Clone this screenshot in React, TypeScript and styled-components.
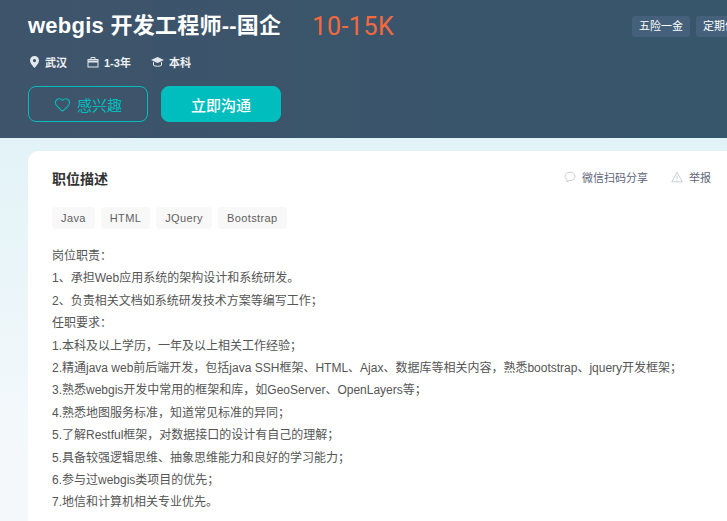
import React from "react";
import styled, { createGlobalStyle } from "styled-components";
import { Heart } from "lucide-react";

const Global = createGlobalStyle`
  html, body {
    margin: 0;
    padding: 0;
    height: 100%;
    overflow: hidden;
    background: #fff;
  }
  body {
    font-family: "Liberation Sans", "Noto Sans CJK SC", sans-serif;
  }
`;

const Page = styled.div`
  width: 727px;
  height: 521px;
  overflow: hidden;
  background: linear-gradient(180deg, #e2f3f7 0, #e2f3f7 138px, #f3f8fb 420px, #f5f8fb 100%);
`;

const Banner = styled.header`
  height: 138px;
  box-sizing: border-box;
  padding: 13px 0 0 28px;
  background: linear-gradient(90deg, #3e546b 0%, #37566b 100%);
  color: #fff;
  position: relative;
`;

const TitleRow = styled.div`
  display: flex;
  align-items: center;
  height: 26px;
`;

const Title = styled.h1`
  margin: 0;
  font-size: 22px;
  line-height: 26px;
  font-weight: 700;
  letter-spacing: 0.25px;
  white-space: nowrap;
`;

const Salary = styled.span`
  margin-left: 31px;
  font-family: Roboto, "Liberation Sans", sans-serif;
  font-size: 25px;
  font-weight: 400;
  letter-spacing: 0.5px;
  color: #f5693f;
`;

const Welfare = styled.div`
  position: absolute;
  left: 632px;
  top: 16px;
  display: flex;
  gap: 6px;
`;

const WelfareTag = styled.span`
  height: 21px;
  line-height: 21px;
  padding: 0 7px;
  border-radius: 3px;
  background: #44607a;
  font-size: 11px;
  white-space: nowrap;
`;

const MetaRow = styled.div`
  display: flex;
  align-items: center;
  gap: 20px;
  margin-top: 14px;
  height: 18px;
  padding-left: 1px;
`;

const MetaItem = styled.span`
  display: inline-flex;
  align-items: center;
  gap: 5px;
  font-size: 11px;
  font-weight: 700;
  color: #eef1f4;
`;

const Actions = styled.div`
  display: flex;
  gap: 13px;
  margin-top: 15px;
`;

const ActionButton = styled.button<{ $filled?: boolean }>`
  width: 120px;
  height: 36px;
  box-sizing: border-box;
  border-radius: 8px;
  border: 1px solid #00bebd;
  background: ${(p) => (p.$filled ? "#00bebd" : "transparent")};
  color: ${(p) => (p.$filled ? "#fff" : "#00bebd")};
  display: flex;
  align-items: center;
  justify-content: center;
  gap: 6px;
  font-family: inherit;
  font-size: 15px;
  font-weight: ${(p) => (p.$filled ? 500 : 400)};
  padding: 0;
`;

const Body = styled.main`
  padding: 13px 0 0 28px;
`;

const Card = styled.section`
  width: 760px;
  height: 420px;
  box-sizing: border-box;
  padding: 19px 24px;
  background: #fff;
  border-radius: 10px 0 0 0;
`;

const CardHead = styled.div`
  width: 659px;
  display: flex;
  align-items: center;
  justify-content: space-between;
  height: 18px;
`;

const CardTitle = styled.h2`
  margin: 0;
  font-size: 14px;
  line-height: 18px;
  font-weight: 700;
  color: #333;
`;

const CardLinks = styled.div`
  display: flex;
  gap: 23px;
  padding-bottom: 4px;
`;

const CardLink = styled.span`
  display: inline-flex;
  align-items: center;
  gap: 6px;
  font-size: 11px;
  color: #5e6579;
`;

const Skills = styled.div`
  display: flex;
  gap: 6px;
  margin-top: 19px;
`;

const Skill = styled.span`
  height: 22px;
  line-height: 22px;
  padding: 0 9px;
  border-radius: 4px;
  background: #f8f8f8;
  font-size: 11px;
  font-weight: 400;
  color: #606060;
  letter-spacing: 0.38px;
`;

const Desc = styled.div`
  margin-top: 16px;
  font-size: 12px;
  line-height: 22.4px;
  color: #555;
  white-space: nowrap;
`;

const PinIcon = () => (
  <svg width="11" height="12" viewBox="0 0 11 12">
    <path
      fill="#e4e8ec"
      fillRule="evenodd"
      d="M5.500 0C2.900 0 1 2 1 4.500 1 7.400 5.500 12 5.500 12S10 7.400 10 4.500C10 2 8.100 0 5.500 0zm0 3a1.600 1.600 0 1 1 0 3.200 1.600 1.600 0 0 1 0-3.200z"
    />
  </svg>
);

const CaseIcon = () => (
  <svg width="12" height="12" viewBox="0 0 12 12" fill="none" stroke="#e4e8ec">
    <rect x="1" y="3.500" width="10" height="7.500" />
    <path d="M4 3.500V1.500h4v2" />
    <path d="M1 5.500h10" strokeWidth="2" />
  </svg>
);

const CapIcon = () => (
  <svg width="13" height="12" viewBox="0 0 13 12">
    <path fill="#e4e8ec" d="M6.500 1 13 4 6.500 7 0 4z" />
    <path fill="none" stroke="#e4e8ec" d="M2.500 6v3.300c1 1.300 7 1.300 8 0V6" />
  </svg>
);

const ChatIcon = () => (
  <svg width="12" height="12" viewBox="0 0 12 12" fill="none" stroke="#c4c8cf" strokeWidth="0.9">
    <path d="M6 1.200c-2.900 0-5 1.800-5 4.100 0 1.500.9 2.700 2.200 3.400L3 10.800l2.300-1.300H6c2.900 0 5-1.900 5-4.200S8.900 1.200 6 1.200z" />
  </svg>
);

const WarnIcon = () => (
  <svg width="12" height="12" viewBox="0 0 12 12" fill="none" stroke="#c4c8cf" strokeWidth="0.9">
    <path d="M6 1.200 .8 10.800h10.400zM6 4.500v3.500M6 8.800v1" />
  </svg>
);

const lines = [
  "岗位职责：",
  "1、承担Web应用系统的架构设计和系统研发。",
  "2、负责相关文档如系统研发技术方案等编写工作；",
  "任职要求：",
  "1.本科及以上学历，一年及以上相关工作经验；",
  "2.精通java web前后端开发，包括java SSH框架、HTML、Ajax、数据库等相关内容，熟悉bootstrap、jquery开发框架；",
  "3.熟悉webgis开发中常用的框架和库，如GeoServer、OpenLayers等；",
  "4.熟悉地图服务标准，知道常见标准的异同；",
  "5.了解Restful框架，对数据接口的设计有自己的理解；",
  "5.具备较强逻辑思维、抽象思维能力和良好的学习能力；",
  "6.参与过webgis类项目的优先；",
  "7.地信和计算机相关专业优先。",
];

export default function App() {
  return (
    <Page>
      <Global />
      <Banner>
        <TitleRow>
          <Title>webgis 开发工程师--国企</Title>
          <Salary>10-15K</Salary>
        </TitleRow>
        <Welfare>
          <WelfareTag>五险一金</WelfareTag>
          <WelfareTag>定期体检</WelfareTag>
        </Welfare>
        <MetaRow>
          <MetaItem><PinIcon />武汉</MetaItem>
          <MetaItem><CaseIcon />1-3年</MetaItem>
          <MetaItem><CapIcon />本科</MetaItem>
        </MetaRow>
        <Actions>
          <ActionButton><Heart size={17} strokeWidth={1.5} />感兴趣</ActionButton>
          <ActionButton $filled>立即沟通</ActionButton>
        </Actions>
      </Banner>
      <Body>
        <Card>
          <CardHead>
            <CardTitle>职位描述</CardTitle>
            <CardLinks>
              <CardLink><ChatIcon />微信扫码分享</CardLink>
              <CardLink><WarnIcon />举报</CardLink>
            </CardLinks>
          </CardHead>
          <Skills>
            <Skill>Java</Skill>
            <Skill>HTML</Skill>
            <Skill>JQuery</Skill>
            <Skill>Bootstrap</Skill>
          </Skills>
          <Desc>
            {lines.map((l) => (
              <div key={l}>{l}</div>
            ))}
          </Desc>
        </Card>
      </Body>
    </Page>
  );
}
